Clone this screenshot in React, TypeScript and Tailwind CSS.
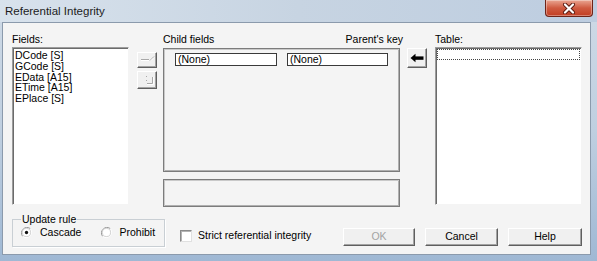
import React from "react";

const raised =
	"bg-[#f0f0f0] border border-t-white border-l-white border-r-[#5f5f5f] border-b-[#5f5f5f] shadow-[inset_-1px_-1px_0_#a3a3a3]";
const sunken =
	"bg-white border border-t-[#9c9c9c] border-l-[#9c9c9c] border-r-[#f4f4f4] border-b-[#f4f4f4] shadow-[inset_1px_1px_0_#6b6b6b]";

function Radio({ checked }: { checked?: boolean }) {
	return (
		<svg width="11" height="11" viewBox="0 0 12 12">
			<path d="M10.2 1.8 A6 6 0 0 0 1.8 10.2" stroke="#8f8f8f" strokeWidth="1" fill="none" />
			<path d="M1.8 10.2 A6 6 0 0 0 10.2 1.8" stroke="#ffffff" strokeWidth="1" fill="none" />
			<circle cx="6" cy="6" r="4.4" fill="#ffffff" stroke="#c4c4c4" strokeWidth="0.8" />
			{checked && <circle cx="6" cy="6" r="1.8" fill="#111" />}
		</svg>
	);
}

export default function App() {
	const fields = ["DCode [S]", "GCode [S]", "EData [A15]", "ETime [A15]", "EPlace [S]"];

	return (
		<div className="w-[597px] h-[261px] flex flex-col overflow-hidden bg-gradient-to-b from-[#cfdae6] via-[#bfcfe0] to-[#9fb8d4] font-['Liberation_Sans',Arial,sans-serif] text-[10.5px] text-black">
			{/* title bar */}
			<div className="h-[22px] shrink-0 flex items-start bg-gradient-to-r from-[#d8e2ec] via-[#c7d4e2] to-[#bdcde0]">
				<span className="pl-[5px] pt-[4px] text-[11.5px] leading-[14px] text-[#1c1c1c]">
					Referential Integrity
				</span>
				<div className="ml-auto mr-[4px] w-[48px] h-[17px] rounded-b-[4px] border border-t-0 border-[#6e2418] bg-gradient-to-b from-[#e9a592] via-[#cf5a40] to-[#c13d22] flex items-center justify-center shadow-[inset_0_0_0_1px_rgba(255,255,255,0.35)]">
					<svg width="14" height="11" viewBox="0 0 14 11">
						<path d="M3 1.5 L11 9.5 M11 1.5 L3 9.5" stroke="#5a1a10" strokeWidth="4" strokeLinecap="round" />
						<path d="M3 1.5 L11 9.5 M11 1.5 L3 9.5" stroke="#ffffff" strokeWidth="2.2" strokeLinecap="round" />
					</svg>
				</div>
			</div>

			{/* client area */}
			<div className="flex-1 ml-[2px] mr-[6px] mb-[6px] border border-[#8b9aac] bg-[#f4f4f4] flex flex-col">
				{/* top row */}
				<div className="flex items-start pl-[9px] pt-[10px]">
					{/* fields */}
					<div className="w-[117px] flex flex-col">
						<div className="h-[14px] leading-[12px]">Fields:</div>
						<div className={`${sunken} h-[158px] pl-[2px] pt-[2px] leading-[10.75px]`}>
							{fields.map((f) => (
								<div key={f}>{f}</div>
							))}
						</div>
					</div>

					{/* small buttons */}
					<div className="ml-[8px] mt-[19px] flex flex-col gap-[3px]">
						<div className={`${raised} w-[20px] h-[16px] flex items-start justify-center`}>
							<svg width="18" height="14" viewBox="0 0 18 14">
								<path d="M3 6.5 H11 M12 7.5 L16 3.5" stroke="#a8a8a8" strokeWidth="1" />
								<path d="M3 7.5 H11 M13 7.5 L16 4.5" stroke="#ffffff" strokeWidth="1" />
							</svg>
						</div>
						<div className={`${raised} w-[20px] h-[18px] flex items-start justify-center`}>
							<svg width="18" height="16" viewBox="0 0 18 16">
								<path d="M8 4.5 H9 M8 8.5 H9 M14.5 5 V11.5 M9 11.5 H14.5" stroke="#a8a8a8" strokeWidth="1" />
								<path d="M15.5 5 V12.5 M9 12.5 H15.5" stroke="#ffffff" strokeWidth="1" />
							</svg>
						</div>
					</div>

					{/* child fields / parent's key */}
					<div className="ml-[6px] w-[237px] flex flex-col">
						<div className="h-[15px] leading-[12px] flex justify-between -mr-[3px]">
							<span>Child fields</span>
							<span>Parent&apos;s key</span>
						</div>
						<div className="h-[124px] border border-[#7c7c7c] shadow-[inset_1px_1px_0_#c9c9c9,inset_-1px_-1px_0_#b0b0b0] flex items-start gap-[10px] pl-[11px] pt-[4px]">
							<div className="w-[102px] h-[13px] bg-white border border-[#3a3a3a] pl-[2px] leading-[11px]">
								(None)
							</div>
							<div className="w-[101px] h-[13px] bg-white border border-[#3a3a3a] pl-[2px] leading-[11px]">
								(None)
							</div>
						</div>
						<div className="mt-[7px] h-[28px] border border-[#7c7c7c] shadow-[inset_1px_1px_0_#c9c9c9,inset_-1px_-1px_0_#b0b0b0]" />
					</div>

					{/* arrow button */}
					<div className={`${raised} ml-[7px] mt-[15px] w-[20px] h-[20px] flex items-center justify-center`}>
						<svg width="14" height="10" viewBox="0 0 14 10">
							<path d="M0.5 5 L5.5 0.8 L5.5 9.2 Z" fill="#000" />
							<rect x="5" y="3.4" width="8.5" height="3.4" fill="#000" />
						</svg>
					</div>

					{/* table */}
					<div className="ml-[8px] w-[147px] flex flex-col">
						<div className="h-[14px] leading-[12px]">Table:</div>
						<div className={`${sunken} h-[158px] p-[1px]`}>
							<div className="h-[11px] border border-dotted border-[#444]" />
						</div>
					</div>
				</div>

				{/* bottom row */}
				<div className="flex items-start pl-[9px] pr-[8px] mt-[6px]">
					<fieldset className="w-[153px] h-[34px] border border-[#c9cfd4] shadow-[1px_1px_0_#ffffff] px-[8px]">
						<legend className="ml-[0px] px-[1px] leading-[12px]">Update rule</legend>
						<div className="flex items-center h-[13px] mt-[1px]">
							<Radio checked />
							<span className="ml-[8px]">Cascade</span>
							<span className="ml-[20px] flex items-center">
								<Radio />
							</span>
							<span className="ml-[7px]">Prohibit</span>
						</div>
					</fieldset>

					<div className="ml-[15px] mt-[15px] flex items-center">
						<div className="w-[12px] h-[12px] bg-white border border-t-[#8a8a8a] border-l-[#8a8a8a] border-r-[#e0e0e0] border-b-[#e0e0e0] shadow-[inset_1px_1px_0_#b4b4b4]" />
						<span className="ml-[6px]">Strict referential integrity</span>
					</div>

					<div className="ml-auto mt-[15px] flex gap-[10px]">
						<div className={`${raised} w-[72px] h-[18px] flex items-center justify-center text-[#a3a3a3]`}>OK</div>
						<div className={`${raised} w-[73px] h-[18px] flex items-center justify-center`}>Cancel</div>
						<div className={`${raised} w-[74px] h-[18px] flex items-center justify-center`}>Help</div>
					</div>
				</div>
			</div>
		</div>
	);
}
